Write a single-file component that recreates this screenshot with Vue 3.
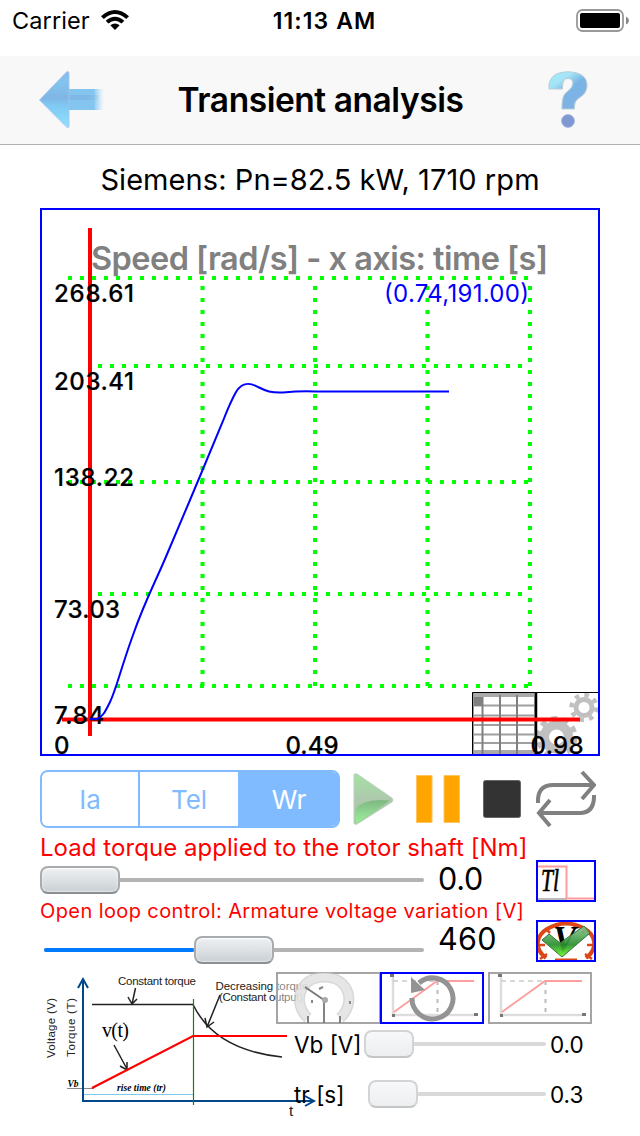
<template>
  <div class="screen">
    <!-- Status bar -->
    <div class="status-bar">
      <div class="carrier">
        <span>Carrier</span>
        <svg width="28" height="20" viewBox="0 0 28 20">
          <path d="M0 6.3Q14-6.3 28 6.3L25.2 9Q14-.8 2.8 9Z" />
          <path d="M4.7 10.8Q14 2.8 23.3 10.8L20.5 13.5Q14 8 7.5 13.5Z" />
          <path d="M9.3 15.3Q14 11.5 18.7 15.3L14 20Z" />
        </svg>
      </div>
      <span class="clock">11:13 AM</span>
      <svg class="battery" width="54" height="24" viewBox="0 0 54 24">
        <rect x="1" y="1" width="46" height="21" rx="5.5" fill="#fff" stroke="#999" stroke-width="1.8" />
        <rect x="4" y="4" width="40" height="15" rx="2" />
        <path d="M50 7.5q3 1.5 3 4t-3 4z" fill="#888" />
      </svg>
    </div>

    <!-- Navigation bar -->
    <header class="nav-bar">
      <svg width="66" height="60" viewBox="0 0 66 60">
        <defs>
          <linearGradient id="arrow" x1="0" y1="0" x2="0" y2="1">
            <stop offset="0" stop-color="#88baf0" />
            <stop offset="0.2" stop-color="#82c4ed" />
            <stop offset="0.47" stop-color="#80b5e6" />
            <stop offset="0.62" stop-color="#7fcbf3" />
            <stop offset="1" stop-color="#90e0ff" />
          </linearGradient>
          <linearGradient id="arrowTail">
            <stop offset="0" stop-color="#84c5ef" />
            <stop offset="0.72" stop-color="#84c5ef" />
            <stop offset="1" stop-color="#a8dcfa" stop-opacity="0" />
          </linearGradient>
          <linearGradient id="arrowShade">
            <stop offset="0.6" stop-color="#7db1e4" />
            <stop offset="1" stop-color="#7db1e4" stop-opacity="0" />
          </linearGradient>
        </defs>
        <rect x="28" y="19" width="37" height="21" fill="url(#arrowTail)" />
        <rect x="28" y="25" width="33" height="5" fill="url(#arrowShade)" opacity=".7" />
        <path d="M0.5 30L27 2.5Q30 0 30 4V56Q30 59 27 56.5Z" fill="url(#arrow)" stroke="#a8c0ea" stroke-width=".8" />
      </svg>
      <h1>Transient analysis</h1>
      <svg width="40" height="58" viewBox="0 0 40 58">
        <defs>
          <linearGradient id="question" x1="0" y1="0" x2=".7" y2="1">
            <stop offset="0" stop-color="#9cecfa" />
            <stop offset="0.3" stop-color="#a6e4f6" />
            <stop offset="0.55" stop-color="#79b5e4" />
            <stop offset="1" stop-color="#82b0e4" />
          </linearGradient>
        </defs>
        <path
          d="M1 18C0 6 8 .8 20 .8C32 .8 39 6 39 14C39 20 36 24 31 27C27 30 26.500 32 26.500 38H14C14 28 15 23.500 20 20C26 16 27 7.500 20 7.500C15 7.500 14.500 12 14.500 18Z"
          fill="url(#question)" stroke="#b9cdd8" stroke-width="1" />
        <circle cx="20" cy="50" r="6.500" fill="#7f98d4" stroke="#aab7dc" stroke-width=".8" />
      </svg>
    </header>

    <p class="motor">Siemens: Pn=82.5 kW, 1710 rpm</p>

    <!-- Chart -->
    <svg class="chart" width="560" height="548" viewBox="40 208 560 548">
      <defs>
        <clipPath id="plot">
          <rect x="41" y="209" width="558" height="546" />
        </clipPath>
      </defs>
      <rect x="41" y="209" width="558" height="546" fill="#fff" />
      <g fill="none" stroke="#808080">
        <rect x="473" y="693" width="62" height="62" stroke="#999" stroke-width="2" />
        <path d="M474 695H535M474 752H535" stroke="#aaa" stroke-width="4" />
        <path d="M474 705.500H535M474 715.500H535M474 725H535M474 734.500H535M474 743H535" stroke="#a0a0a0" stroke-width="2" />
        <path d="M482.500 697V754M500 695V754M517 695V754" stroke-width="2" />
        <rect x="474" y="697" width="8" height="9" fill="#808080" stroke="none" />
      </g>
      <g fill="none" stroke="#c0c0c0" clip-path="url(#plot)">
        <circle cx="584" cy="707.500" r="8" stroke-width="5" />
        <circle cx="584" cy="707.500" r="12.500" stroke-width="4.500" stroke-dasharray="4.500 5.320" />
        <circle cx="556.500" cy="737" r="12" stroke-width="9" />
        <circle cx="556.500" cy="737" r="18.500" stroke-width="5" stroke-dasharray="6 5.620" />
      </g>
      <path d="M472.500 755V692.500H600" fill="none" stroke="#000" />
      <path d="M536 692V754" stroke="#000" stroke-width="2.500" />
      <rect x="41" y="209" width="558" height="546" fill="none" stroke="#00f" stroke-width="2" />

      <text class="chart-title" x="91" y="269.500" textLength="457" lengthAdjust="spacing">Speed [rad/s] - x axis: time [s]</text>

      <g stroke="#0f0" stroke-width="4" stroke-dasharray="4 8">
        <line v-for="g in rows" :key="g.y" :x1="g.x" :y1="g.y" x2="528.500" :y2="g.y" />
        <line v-for="x in cols" :key="x" :x1="x" y1="286" :x2="x" y2="686" />
      </g>
      <path d="M90 228V736M62 719.500H580" stroke="#f00" stroke-width="4" />
      <text
        v-for="l in labels" :key="l.text" class="axis"
        :x="l.x" :y="l.y" :textLength="l.w"
      >{{ l.text }}</text>
      <path
        d="M90 719H97C103 717 106 710 110 702C116 690 120 671 133 635C145 601 153 587 165 559L190 500L203 469L223 421C228 408 231 401 236 392C242 382.500 249 382 258 387C266 391 271 393 283 392.500C294 391.500 300 391 315 391.500H449"
        fill="none" stroke="#00f" stroke-width="2" />
      <text class="point" x="384" y="301.500" textLength="145">(0.74,191.00)</text>
    </svg>

    <!-- Curve selection and playback -->
    <div class="toolbar">
      <div class="segments">
        <button
          v-for="s in segments" :key="s"
          :class="{ active: s === selected }"
          @click="selected = s"
        >{{ s }}</button>
      </div>
      <svg class="play" width="42" height="52" viewBox="0 0 42 52">
        <defs>
          <linearGradient id="play" x1="0" y1="0" x2="0" y2="1">
            <stop offset="0" stop-color="#a2e3a2" />
            <stop offset="0.5" stop-color="#aec9ad" />
            <stop offset="1" stop-color="#96ce96" />
          </linearGradient>
          <linearGradient id="playLow" x1="0" y1="0" x2="0" y2="1">
            <stop offset="0" stop-color="#80b782" />
            <stop offset="1" stop-color="#9bf09b" />
          </linearGradient>
        </defs>
        <path d="M1 2Q1 0 4 1L39 25Q41 27 39 29L4 51Q1 52 1 50Z" fill="url(#play)" stroke="#bfd1bf" />
        <path d="M2 37Q10 25 37 27.500L4 50Q2 50 2 37Z" fill="url(#playLow)" />
      </svg>
      <svg class="pause" width="44" height="48" viewBox="0 0 44 48">
        <path d="M.5.500H16V47.500H.500ZM28 .500H43.500V47.500H28Z" fill="#ffa500" stroke="#ffc45c" />
      </svg>
      <svg class="stop" width="38" height="38" viewBox="0 0 38 38">
        <rect x=".5" y=".5" width="37" height="37" rx="2" fill="#333" stroke="#666" />
      </svg>
      <svg class="repeat" width="60" height="58" viewBox="0 0 60 58">
        <g fill="none" stroke="#808080" stroke-width="4">
          <path d="M2 33V29Q3 15 17 15H57M46 2L58 15L46 29" />
          <path d="M58 25V28Q57 43 44 43H3M14 30L3 43L14 56" />
        </g>
      </svg>
    </div>

    <!-- Load torque -->
    <div class="caption load">Load torque applied to the rotor shaft [Nm]</div>
    <div class="control first">
      <div class="slider">
        <div class="track"></div>
        <div class="thumb"></div>
      </div>
      <span class="value">0.0</span>
      <svg class="tile" width="60" height="42" viewBox="0 0 60 42">
        <path d="M1 39H31" stroke="#bbb" stroke-width="2" />
        <path d="M1 6.500H30.500V38.500H59" fill="none" stroke="#ff9c9c" stroke-width="2" />
        <text x="5" y="31" class="tl" textLength="18" lengthAdjust="spacingAndGlyphs">Tl</text>
        <rect x="1" y="1" width="58" height="40" fill="none" stroke="#00f" stroke-width="2" />
      </svg>
    </div>

    <!-- Armature voltage -->
    <div class="caption loop">Open loop control: Armature voltage variation [V]</div>
    <div class="control second">
      <div class="slider">
        <div class="track"></div>
        <div class="fill" :style="{ width: voltage + 'px' }"></div>
        <div class="thumb" :style="{ marginLeft: voltage + 'px' }"></div>
      </div>
      <span class="value">460</span>
      <svg class="tile" width="60" height="42" viewBox="0 0 60 42">
        <defs>
          <linearGradient id="check" x1="0" y1="0" x2="0" y2="1">
            <stop offset="0" stop-color="#8cc795" />
            <stop offset="0.6" stop-color="#2a8f2e" />
            <stop offset="1" stop-color="#68ff22" />
          </linearGradient>
        </defs>
        <g fill="none" stroke="#dc4717">
          <path d="M10 38C-3 28 1 15 11 9Q30-2 49 9C59 15 63 28 50 38" stroke-width="4" />
          <path d="M3 25H9M51 25H57M4 39L11 34M56 39L49 34M10 9L14 13M20 3L22 8M40 3L38 8M50 9L46 13" stroke-width="2.500" />
          <path d="M19 40H41" stroke-width="3" />
        </g>
        <text x="17" y="31" class="volt" textLength="23" lengthAdjust="spacingAndGlyphs">V</text>
        <path d="M6 20L13 14L24 23L48 6L54 13L26 37Z" fill="url(#check)" fill-opacity=".92" stroke="#39713c" />
        <rect x="1" y="1" width="58" height="40" fill="none" stroke="#00f" stroke-width="2" />
      </svg>
    </div>

    <!-- Voltage ramp -->
    <section class="ramp">
      <svg class="diagram" width="290" height="158" viewBox="30 970 290 158">
        <g fill="none" stroke="#222" stroke-width="1.500">
          <path d="M92 1004.500H193Q215 1050 282 1057" />
          <path d="M135.500 988L132 1004M128 997L132 1004L137 999M220 995L207 1027M205 1018L207 1027L214 1022M114 1045L127 1069M120 1066L127 1070V1062" />
        </g>
        <path d="M67 1088.500H94" stroke="#888" />
        <path d="M83 1094.500H193" stroke="#7dc9e8" />
        <path d="M83 1101.500V980M78 988L83 979L88 988M82 1101H314M305 1096L314 1101L305 1106" fill="none" stroke="#00468c" stroke-width="2" />
        <path d="M92 1088L193 1036H287" fill="none" stroke="#f00" stroke-width="2.200" />
        <path d="M193.500 999V1105" stroke="#128012" stroke-width="1.200" />
        <g class="note">
          <text x="118" y="985" textLength="78">Constant torque</text>
          <text x="215.500" y="990" textLength="93">Decreasing torque</text>
          <text x="219" y="1000.500" textLength="84">(Constant output)</text>
          <text transform="translate(54.500 1058) rotate(-90)" textLength="60">Voltage (V)</text>
          <text transform="translate(75 1057) rotate(-90)" textLength="59" xml:space="preserve">Torque  (T)</text>
        </g>
        <text class="vt" x="102" y="1037" textLength="27">v(t)</text>
        <text class="small" x="67.500" y="1087" textLength="11">Vb</text>
        <text class="small" x="117" y="1091" textLength="49">rise time (tr)</text>
        <text class="t" x="289" y="1116">t</text>
      </svg>
      <div class="panel">
        <div class="modes">
          <svg width="104" height="52" viewBox="0 0 104 52">
            <rect x="1" y="1" width="103" height="50" fill="#fff" fill-opacity=".45" stroke="#a5a5a5" stroke-width="2" />
            <path d="M32 46C16 32 23 5 48 5C74 5 80 32 64 46" fill="none" stroke="#b8b8b8" stroke-opacity=".55" stroke-width="11" />
            <path d="M32 46C16 32 23 5 48 5C74 5 80 32 64 46" fill="none" stroke="#ececec" stroke-opacity=".7" stroke-width="8" />
            <path d="M48 51V28L29 15M32 51V44M64 51V44" fill="none" stroke="#777" stroke-width="1.800" />
            <circle cx="49" cy="28" r="3" fill="#aaa" />
            <path d="M36 31V28M43 17L47 15M74 32V29" stroke="#888" stroke-width="2" />
          </svg>
          <svg width="104" height="52" viewBox="0 0 104 52">
            <path d="M13 4V43H94" fill="none" stroke="#ddd" stroke-width="2.500" />
            <path d="M13 9H56" stroke="#ccc" stroke-width="1.500" stroke-dasharray="5 4" />
            <path d="M57.500 9V42" stroke="#bbb" stroke-width="2" stroke-dasharray="4 5" />
            <path d="M14 40L57 9H94" fill="none" stroke="#ff9e9e" stroke-width="1.800" />
            <path d="M10 2H14V5H10ZM94 41H98V44H94ZM12 42H15V45H12Z" fill="#777" />
            <path d="M32 26A20.500 20.500 0 1 0 39 11" fill="none" stroke="#939393" stroke-width="5" />
            <path d="M31 5L31 21L45 18Z" fill="#939393" />
            <rect x="1" y="1" width="102" height="50" fill="none" stroke="#00f" stroke-width="2" />
          </svg>
          <svg class="last" width="104" height="52" viewBox="0 0 104 52">
            <path d="M13 4V43H94" fill="none" stroke="#ddd" stroke-width="2.500" />
            <path d="M13 9H56" stroke="#ccc" stroke-width="1.500" stroke-dasharray="5 4" />
            <path d="M57.500 9V42" stroke="#bbb" stroke-width="2" stroke-dasharray="4 5" />
            <path d="M14 40L57 9H94" fill="none" stroke="#ff9e9e" stroke-width="1.800" />
            <path d="M10 2H14V5H10ZM94 41H98V44H94ZM12 42H15V45H12Z" fill="#777" />
            <rect x="1" y="1" width="102" height="50" fill="none" stroke="#a5a5a5" stroke-width="2" />
          </svg>
        </div>
        <div v-for="r in ramp" :key="r.name" class="ramp-row">
          <span class="name">{{ r.name }}</span>
          <div class="slider faded" :style="{ marginLeft: r.offset + 'px', width: 182 - r.offset + 'px' }">
            <div class="track"></div>
            <div class="thumb"></div>
          </div>
          <span class="number">{{ r.value }}</span>
        </div>
      </div>
    </section>
  </div>
</template>

<script setup>
import { ref } from "vue";

const segments = ["Ia", "Tel", "Wr"];
const selected = ref("Wr");
const voltage = ref(150);

const rows = [
  { x: 68, y: 278 },
  { x: 98, y: 366 },
  { x: 68, y: 482 },
  { x: 98, y: 594 },
  { x: 68, y: 686 },
];
const cols = [202.5, 315, 427.5, 530];

const labels = [
  { text: "268.61", x: 54, y: 301.5, w: 80 },
  { text: "203.41", x: 54, y: 389.5, w: 80 },
  { text: "138.22", x: 54, y: 485.5, w: 80 },
  { text: "73.03", x: 54, y: 617.5, w: 66 },
  { text: "7.84", x: 54, y: 723.5, w: 50 },
  { text: "0", x: 54, y: 753.5, w: 16 },
  { text: "0.49", x: 285.5, y: 753.5, w: 53 },
  { text: "0.98", x: 530.5, y: 753.5, w: 53 },
];

const ramp = [
  { name: "Vb [V]", value: "0.0", offset: 0 },
  { name: "tr [s]", value: "0.3", offset: 4 },
];
</script>

<style>
body {
  margin: 0;
  background: #fff;
}
</style>

<style scoped>
.screen {
  width: 640px;
  height: 1136px;
  overflow: hidden;
  background: #fff;
  color: #000;
  font-family: Inter, "Liberation Sans", sans-serif;
}

svg {
  display: block;
  flex: none;
}

.status-bar {
  display: grid;
  grid-template-columns: 1fr auto 1fr;
  align-items: center;
  height: 40px;
  margin-bottom: 16px;
  padding: 0 10px 0 12px;
  font-size: 23.5px;
}

.carrier {
  display: flex;
  align-items: center;
  gap: 11px;
  letter-spacing: 0.1px;
}

.clock {
  padding-top: 2px;
  margin-left: 7px;
  font-weight: 600;
  font-size: 23px;
  letter-spacing: 1.1px;
}

.battery {
  justify-self: end;
  margin-top: 1px;
}

.nav-bar {
  display: flex;
  align-items: center;
  justify-content: space-between;
  box-sizing: border-box;
  height: 89px;
  padding: 0 52px 0 39px;
  border-bottom: 1px solid #b2b2b2;
  background: #f8f8f8;
}

.nav-bar h1 {
  margin: 0;
  padding-right: 12px;
  font-size: 33.5px;
  font-weight: 600;
  letter-spacing: -0.45px;
}

.motor {
  height: 63px;
  margin: 0;
  line-height: 70px;
  font-size: 29px;
  letter-spacing: 0.07px;
  text-align: center;
  white-space: nowrap;
}

.chart {
  margin-left: 40px;
  overflow: visible;
}

.chart-title {
  font-size: 32.5px;
  font-weight: 600;
  fill: #808080;
}

.axis {
  font-size: 24px;
  font-weight: 500;
  stroke: #000;
  stroke-width: 0.2px;
}

.point {
  font-size: 24px;
  fill: #00f;
}

.toolbar {
  display: flex;
  align-items: center;
  height: 58px;
  margin: 14px 0 0 40px;
}

.segments {
  display: grid;
  grid-template-columns: 98px 100px 98px;
  box-sizing: border-box;
  width: 300px;
  height: 58px;
  border: 2px solid #80bbff;
  border-radius: 8px;
  overflow: hidden;
}

.segments button {
  padding: 0;
  border: 0;
  border-right: 2px solid #80bbff;
  background: #fff;
  color: #80bbff;
  font: 26px Inter, sans-serif;
}

.segments button.active {
  padding-left: 2px;
  background: #80bbff;
  color: #fff;
}

.play {
  margin-left: 13px;
}

.pause {
  margin-left: 21px;
}

.stop {
  margin-left: 23px;
}

.repeat {
  margin-left: 15px;
}

.caption {
  margin-left: 40px;
  color: #f00;
  white-space: nowrap;
}

.load {
  height: 32px;
  line-height: 40px;
  font-size: 24px;
  letter-spacing: 0.05px;
}

.loop {
  height: 18px;
  line-height: 18px;
  font-size: 20px;
  letter-spacing: 0.4px;
}

.control {
  display: flex;
  align-items: center;
  height: 42px;
  margin-left: 40px;
}

.slider {
  display: grid;
  align-items: center;
  width: 384px;
  height: 42px;
}

.slider > * {
  grid-area: 1 / 1;
}

.track {
  height: 4px;
  margin-left: 4px;
  border-radius: 2px;
  background: #b3b3b3;
}

.fill {
  height: 4px;
  margin-left: 4px;
  border-radius: 2px;
  background: #007aff;
}

.thumb {
  box-sizing: border-box;
  width: 80px;
  height: 28px;
  border: 2px solid #a9acae;
  border-bottom-color: #8a8f93;
  border-radius: 8px;
  background: linear-gradient(#edf0f2, #dfe3e6 45%, #c9cfd3);
  box-shadow: inset 0 1px 2px #fff, inset 0 -1px 1px #e0e4e7;
}

.second .thumb {
  transform: translateX(4px);
}

.value {
  width: 97px;
  margin-left: 15px;
  padding-bottom: 5px;
  font-size: 30.5px;
  letter-spacing: -0.3px;
  text-indent: -1px;
}

.first .slider {
  padding-bottom: 2px;
}

.second .slider {
  padding-top: 17px;
}

.second .value {
  letter-spacing: 0.3px;
}

.tl {
  font: italic 31px "Liberation Serif", serif;
  stroke: #000;
  stroke-width: 0.6px;
}

.volt {
  font: italic bold 36px "Liberation Serif", serif;
}

.ramp {
  display: grid;
  margin: 8px 0 0 30px;
}

.diagram,
.panel {
  grid-area: 1 / 1;
}

.note,
.t {
  font: 11.5px "Liberation Sans", sans-serif;
  fill: #222;
}

.t {
  font-size: 15px;
}

.vt {
  font: 20px "Liberation Serif", serif;
}

.small {
  font: italic bold 9.5px "Liberation Serif", serif;
}

.panel {
  margin: 2px 0 0 246px;
}

.modes {
  display: flex;
}

.last {
  margin-left: 4px;
}

.ramp-row {
  display: flex;
  align-items: center;
  height: 40px;
  margin-bottom: 10px;
  font-size: 22.5px;
}

.name {
  width: 70px;
  margin-left: 18px;
  white-space: nowrap;
}

.faded {
  flex: none;
}

.number {
  margin-left: 4px;
}

.faded .track {
  background: #d9d9d9;
}

.faded .thumb {
  width: 50px;
  border-color: #d2d4d5;
  border-bottom-color: #c3c5c7;
  background: linear-gradient(#f7f8f9, #eceeef);
  box-shadow: none;
}
</style>
